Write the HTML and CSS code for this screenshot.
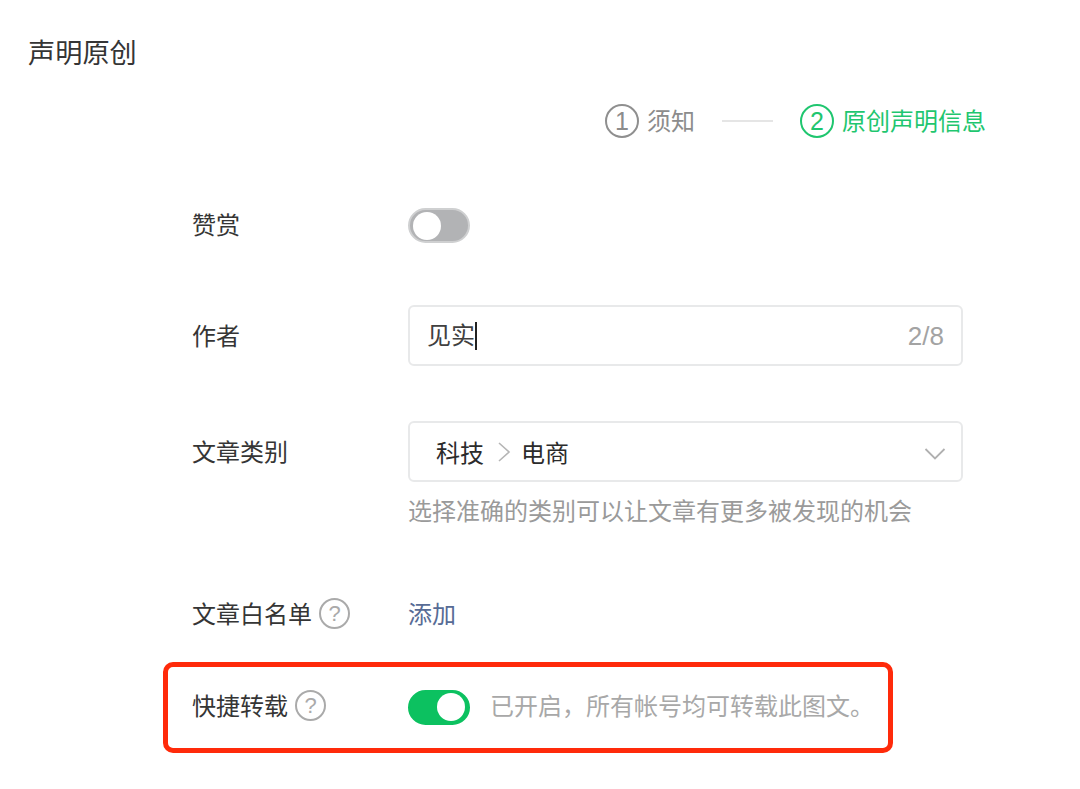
FILE: index.html
```html
<!DOCTYPE html>
<html lang="zh-CN">
<head>
    <meta charset="UTF-8">
    <meta name="viewport" content="width=device-width, initial-scale=1.0">
    <title>声明原创</title>
    <link rel="stylesheet" href="styles.css">
</head>
<body>
    <h1 class="page-title">声明原创</h1>

    <!-- Steps -->
    <div class="steps">
        <span class="step-num">1</span>
        <span class="step-text">须知</span>
        <span class="step-line"></span>
        <span class="step-num active">2</span>
        <span class="step-text active">原创声明信息</span>
    </div>

    <div class="form">
        <div class="row row-switch row-reward">
            <div class="label">赞赏</div>
            <div class="switch"><span class="knob"></span></div>
        </div>

        <div class="row row-author">
            <div class="label">作者</div>
            <div class="field">
                <span class="field-value">见实</span><span class="caret"></span>
                <span class="counter">2/8</span>
            </div>
        </div>

        <div class="row row-category">
            <div class="label">文章类别</div>
            <div class="field field-select">
                <span>科技</span>
                <svg class="crumb-arrow" width="14" height="22" viewBox="0 0 14 22"><path d="M2 2l10 9-10 9" fill="none" stroke="#b5b5b5" stroke-width="1.6"/></svg>
                <span>电商</span>
                <svg class="select-arrow" width="22" height="14" viewBox="0 0 22 14"><path d="M1.5 2l9.500 9.500L20.500 2" fill="none" stroke="#b0b0b0" stroke-width="1.8"/></svg>
            </div>
        </div>
        <div class="hint">选择准确的类别可以让文章有更多被发现的机会</div>

        <div class="row row-whitelist">
            <div class="label">文章白名单<span class="help">?</span></div>
            <a class="link" href="#">添加</a>
        </div>

        <div class="highlight">
            <div class="row row-switch">
                <div class="label">快捷转载<span class="help">?</span></div>
                <div class="switch on"><span class="knob"></span></div>
                <div class="switch-text">已开启，所有帐号均可转载此图文。</div>
            </div>
        </div>
    </div>
</body>
</html>
```

FILE: styles.css
```css
* {
    margin: 0;
    padding: 0;
    box-sizing: border-box;
}

body {
    background: #fff;
    color: #353535;
    font-family: 'Noto Sans CJK SC', 'Liberation Sans', sans-serif;
    font-size: 24px;
    line-height: 34px;
}

/* Title */
.page-title {
    padding: 32px 0 0 28px;
    font-size: 27.2px;
    font-weight: 400;
    line-height: 38px;
    color: #353535;
}

/* Steps */
.steps {
    display: flex;
    justify-content: flex-end;
    align-items: center;
    height: 40px;
    margin-top: 31px;
    padding-right: 94px;
    color: #8c8c8c;
}

.step-text {
    padding-bottom: 2px;
    line-height: 32px;
}

.step-num {
    width: 34px;
    height: 34px;
    margin-right: 8px;
    border: 2px solid #8f8f8f;
    border-radius: 50%;
    font-family: 'Liberation Sans', sans-serif;
    font-size: 25px;
    line-height: 30px;
    text-align: center;
}

.step-num.active {
    border-color: #1fc66f;
    color: #1fc66f;
}

.step-text.active {
    color: #1fc66f;
}

.step-line {
    width: 51px;
    height: 2px;
    margin: 0 27px 0 27px;
    background: #e5e5e5;
}

/* Form */
.form {
    padding-left: 192px;
}

.row {
    display: flex;
    align-items: center;
}

.label {
    display: flex;
    align-items: center;
    flex: 0 0 216px;
    padding-bottom: 2px;
    line-height: 32px;
}

.row-switch .label,
.row-switch .switch-text {
    padding-bottom: 4px;
    line-height: 30px;
}

.row-reward {
    margin-top: 67px;
}

.row-author {
    margin-top: 62px;
}

.row-category {
    margin-top: 55px;
}

.row-whitelist {
    margin-top: 70px;
}

/* Switch */
.switch {
    display: flex;
    align-items: center;
    flex: none;
    width: 62px;
    height: 35px;
    padding: 0 3px;
    border: 2px solid #cfd0d1;
    border-radius: 18px;
    background: #b2b3b5;
}

.switch .knob {
    width: 28px;
    height: 28px;
    border-radius: 50%;
    background: #fff;
}

.switch.on {
    justify-content: flex-end;
    border-color: #0cc160;
    background: #0cc160;
}

.switch-text {
    margin-left: 20px;
    color: #a8a8a8;
    white-space: nowrap;
}

/* Fields */
.field {
    display: flex;
    align-items: center;
    width: 555px;
    height: 61px;
    padding: 0 17px;
    border: 2px solid #e8e9ea;
    border-radius: 6px;
}

.field-value {
    padding-bottom: 4px;
    line-height: 30px;
    color: #404040;
}

.caret {
    width: 2px;
    height: 28px;
    background: #222;
}

.counter {
    margin-left: auto;
    font-family: 'Liberation Sans', sans-serif;
    font-size: 26px;
    color: #a3a3a3;
}

.field-select {
    padding: 0 26px;
    color: #2b2b2b;
}

.crumb-arrow {
    margin: 0 10px 0 13px;
}

.select-arrow {
    margin-top: 4px;
    margin-left: auto;
    margin-right: -11px;
}

.hint {
    margin: 11px 0 0 216px;
    color: #9a9a9a;
}

.link {
    padding-bottom: 2px;
    line-height: 32px;
    color: #576b95;
    text-decoration: none;
}

.help {
    width: 31px;
    height: 31px;
    margin-left: 7px;
    border: 2px solid #aaa;
    border-radius: 50%;
    font-family: 'Liberation Sans', sans-serif;
    font-size: 22px;
    line-height: 27px;
    text-align: center;
    color: #aaa;
}

/* Red highlight box */
.highlight {
    width: 730px;
    height: 91px;
    margin: 31px 0 0 -29px;
    padding: 10px 0 0 24px;
    border: 5px solid #ff2a0a;
    border-radius: 10px;
}

.highlight .row {
    height: 60px;
}
```
